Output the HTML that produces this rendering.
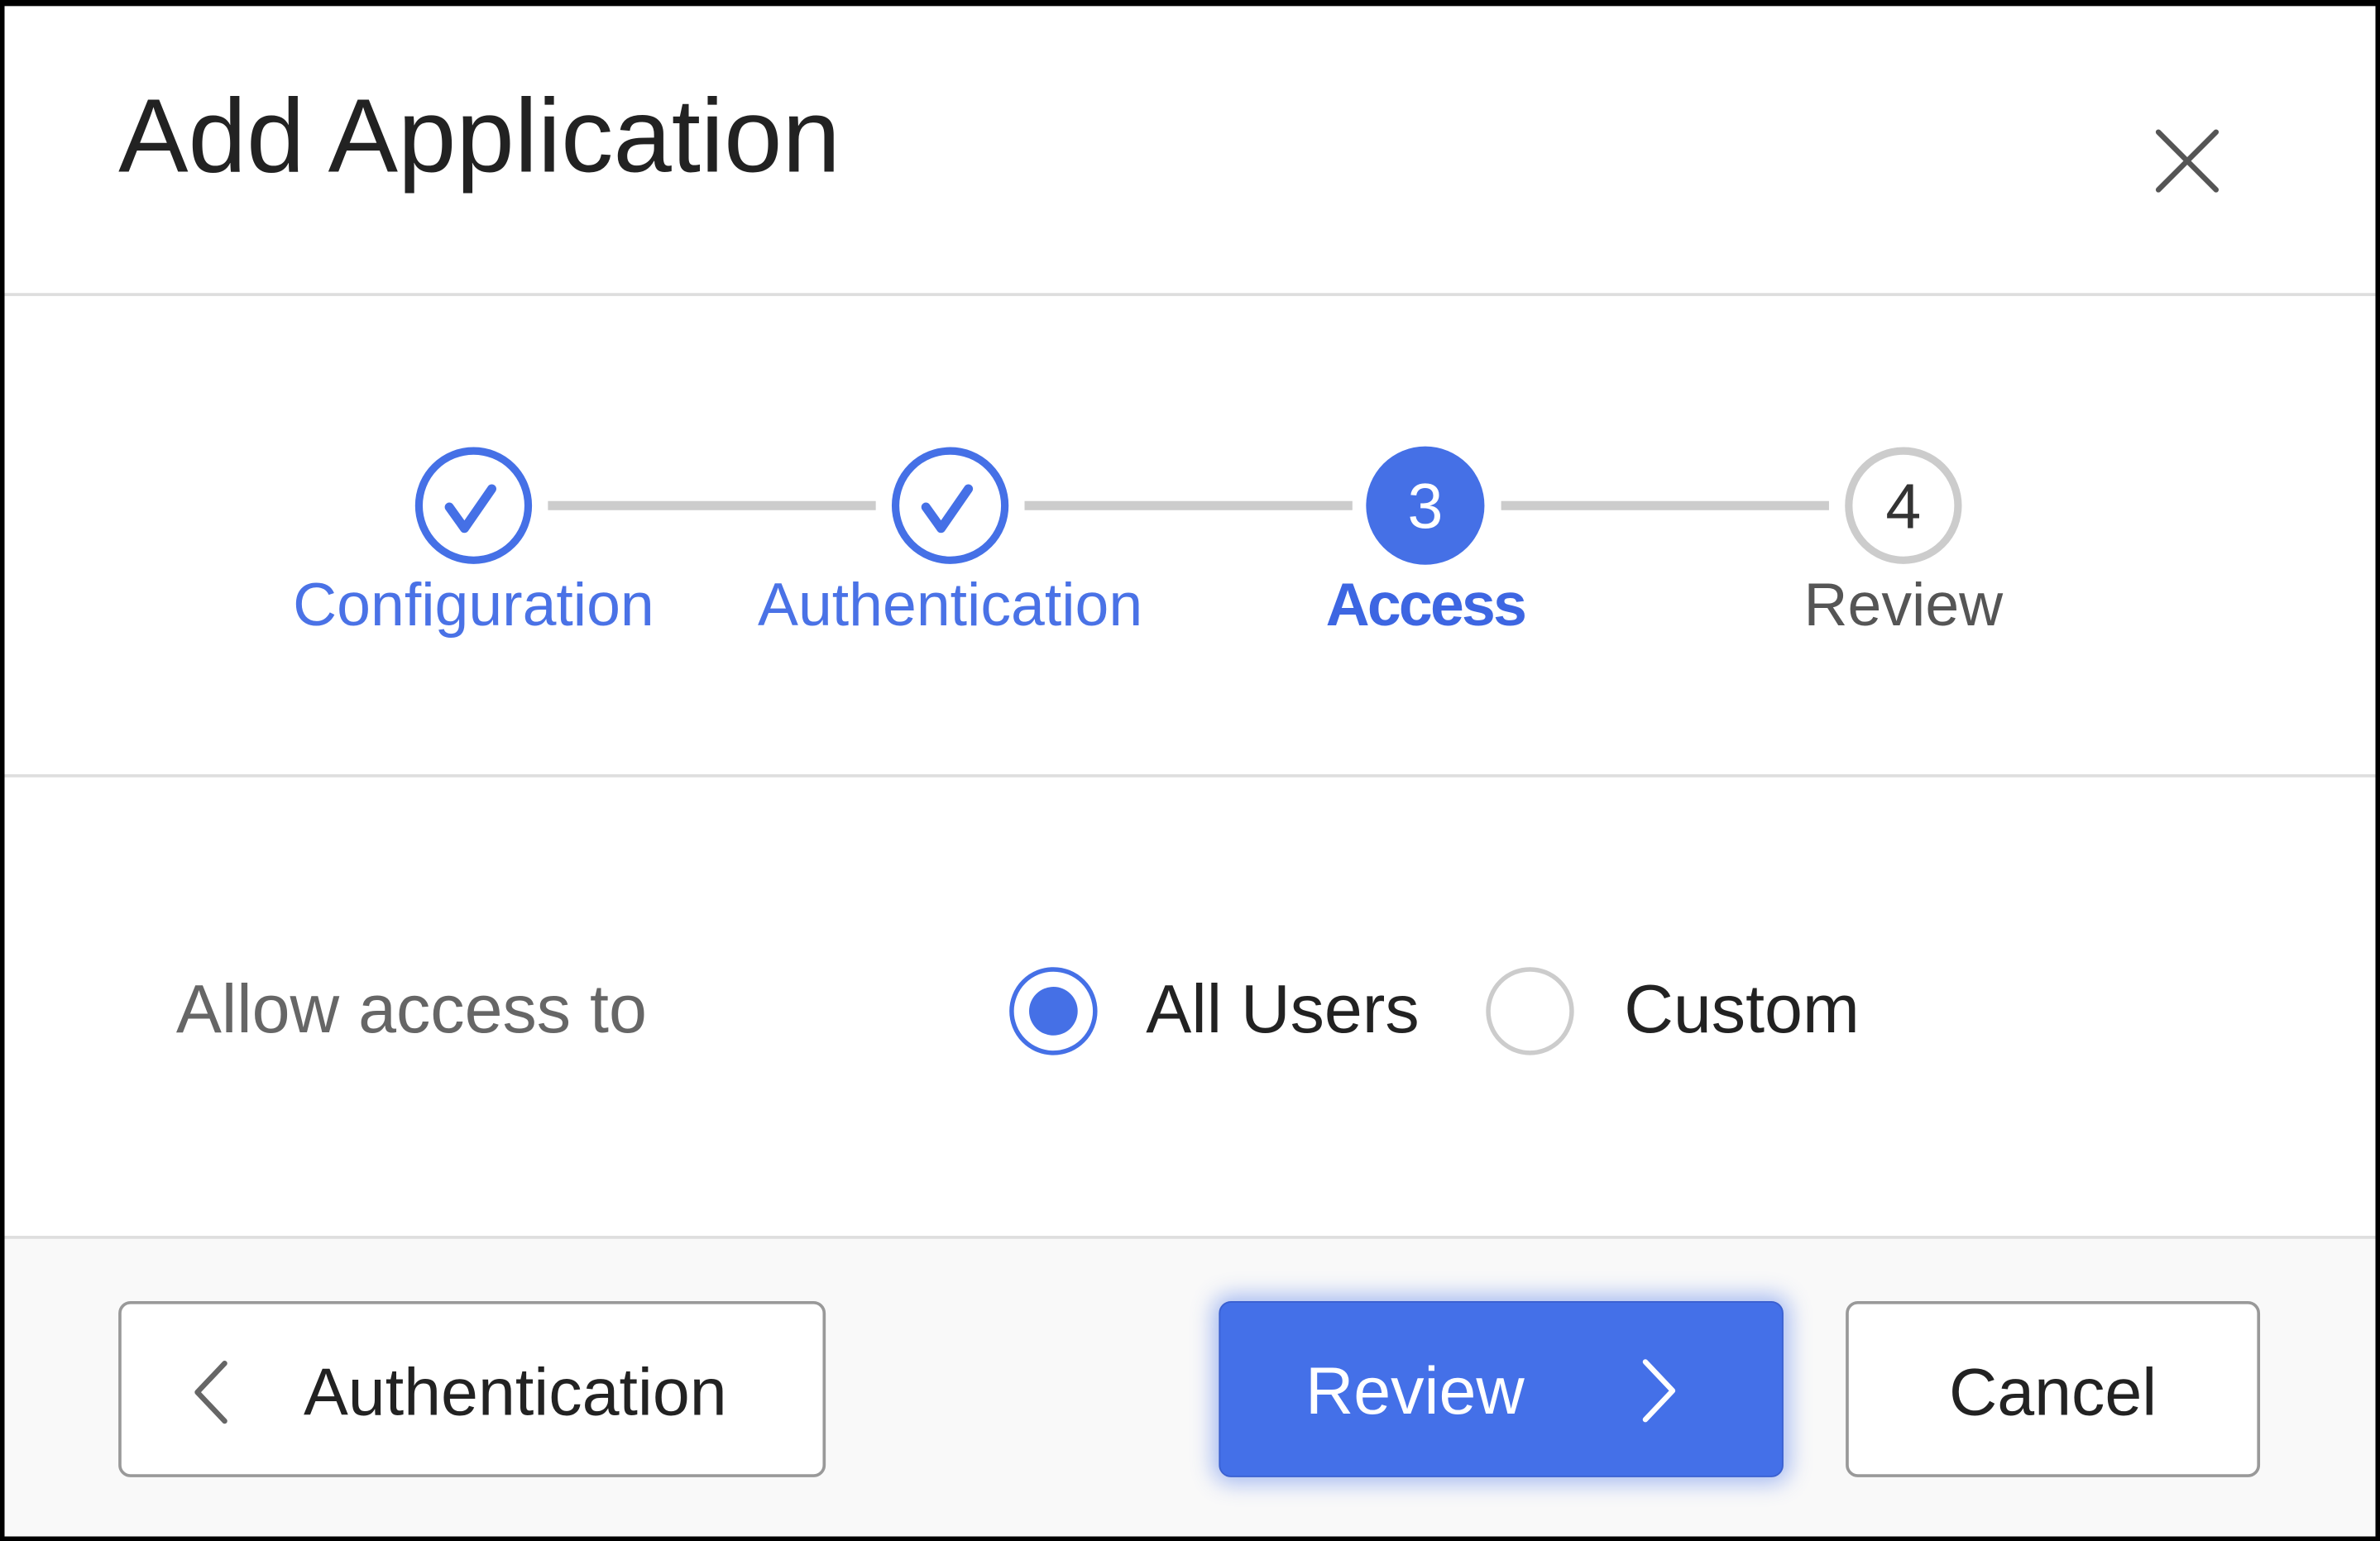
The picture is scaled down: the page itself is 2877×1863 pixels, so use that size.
<!DOCTYPE html>
<html><head><meta charset="utf-8"><style>
html,body{margin:0;padding:0;background:#000;}
body{width:2877px;height:1863px;overflow:hidden;position:relative;}
#s{position:absolute;left:0;top:0;width:1568px;height:1015px;transform-origin:0 0;transform:scale(1.83482,1.83547);background:#000;font-family:"Liberation Sans",sans-serif;}
#p{position:absolute;left:3px;top:4px;width:1562px;height:1008px;background:#fff;overflow:hidden;}
.a{position:absolute;white-space:nowrap;}
.hr{position:absolute;left:0;width:100%;height:2px;background:#dedede;}
.lbl{font-size:40px;color:#4a72e6;transform:translateX(-50%);}
.btn{position:absolute;top:853px;height:116px;box-sizing:border-box;border-radius:8px;font-size:44px;}
</style></head><body><div id="s"><div id="p">
<div class="a" style="left:75px;top:46px;font-size:69px;color:#222;">Add Application</div>
<svg class="a" style="left:1414px;top:78px" width="50" height="50" viewBox="0 0 50 50"><path d="M5 5L43 43M43 5L5 43" stroke="#555" stroke-width="3.5" stroke-linecap="round"/></svg>
<div class="hr" style="top:189px"></div>
<svg class="a" style="left:0;top:280px" width="1562" height="110">
<g stroke="#ccc" stroke-width="6"><line x1="358" y1="49" x2="574" y2="49"/><line x1="672" y1="49" x2="888" y2="49"/><line x1="986" y1="49" x2="1202" y2="49"/></g>
<circle cx="309" cy="49" r="36" fill="none" stroke="#4570e6" stroke-width="5"/>
<path d="M293 50l10 14 18-26" fill="none" stroke="#4570e6" stroke-width="6" stroke-linecap="round" stroke-linejoin="round"/>
<circle cx="623" cy="49" r="36" fill="none" stroke="#4570e6" stroke-width="5"/>
<path d="M607 50l10 14 18-26" fill="none" stroke="#4570e6" stroke-width="6" stroke-linecap="round" stroke-linejoin="round"/>
<circle cx="936" cy="49" r="39" fill="#4570e6"/>
<text x="936" y="64" font-size="42" fill="#fff" text-anchor="middle" font-family="Liberation Sans">3</text>
<circle cx="1251" cy="49" r="36" fill="none" stroke="#ccc" stroke-width="5"/>
<text x="1251" y="64" font-size="42" fill="#333" text-anchor="middle" font-family="Liberation Sans">4</text>
</svg>
<div class="a lbl" style="left:309px;top:373px;">Configuration</div>
<div class="a lbl" style="left:623px;top:373px;">Authentication</div>
<div class="a lbl" style="left:936px;top:373px;font-weight:bold;color:#3d66e2;letter-spacing:-1.5px;">Access</div>
<div class="a lbl" style="left:1251px;top:373px;color:#555;">Review</div>
<div class="hr" style="top:506px"></div>
<div class="a" style="left:113px;top:635px;font-size:45px;color:#666;">Allow access to</div>
<svg class="a" style="left:655px;top:624px" width="400" height="80">
<circle cx="36" cy="38" r="27.5" fill="none" stroke="#4570e6" stroke-width="3"/>
<circle cx="36" cy="38" r="16" fill="#4570e6"/>
<circle cx="350" cy="38" r="27.5" fill="none" stroke="#ccc" stroke-width="3"/>
</svg>
<div class="a" style="left:752px;top:635px;font-size:45px;color:#222;">All Users</div>
<div class="a" style="left:1067px;top:635px;font-size:45px;color:#222;">Custom</div>
<div style="position:absolute;left:0;top:810px;width:100%;height:200px;background:#f9f9f9;border-top:2px solid #dedede;"></div>
<div class="btn" style="left:75px;width:466px;background:#fff;border:2px solid #999;">
<svg class="a" style="left:44px;top:36px" width="30" height="44"><path d="M24 3L6 22L24 41" fill="none" stroke="#666" stroke-width="3.5" stroke-linecap="round" stroke-linejoin="round"/></svg>
<div class="a" style="left:120px;top:34px;color:#222;">Authentication</div></div>
<div class="btn" style="left:800px;width:372px;background:#4470e8;border:1.5px solid #3a60d0;box-shadow:0 0 14px 4px rgba(68,112,232,0.45);">
<div class="a" style="left:56px;top:34px;color:#fff;">Review</div>
<svg class="a" style="left:274px;top:36px" width="30" height="44"><path d="M6 3L24 22L6 41" fill="none" stroke="#fff" stroke-width="3.5" stroke-linecap="round" stroke-linejoin="round"/></svg></div>
<div class="btn" style="left:1213px;width:273px;background:#fff;border:2px solid #999;">
<div class="a" style="left:0;width:100%;text-align:center;top:34px;color:#222;">Cancel</div></div>
</div></div></body></html>
